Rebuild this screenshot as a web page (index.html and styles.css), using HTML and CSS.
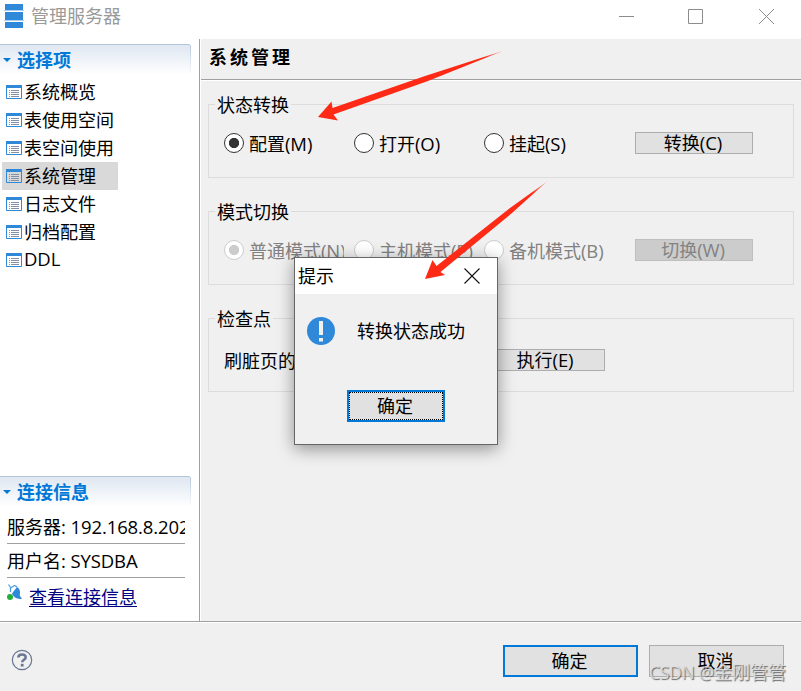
FILE: index.html
```html
<!DOCTYPE html>
<html lang="zh-CN">
<head>
<meta charset="utf-8">
<title>管理服务器</title>
<link rel="stylesheet" href="styles.css">
</head>
<body>
<svg class="defs" width="0" height="0">
  <symbol id="list" viewBox="0 0 16 14">
    <path d="M.5 1v12.500h15V1" fill="none" stroke="#2f88d8"/>
    <path d="M0 0h16v3H0z" fill="#2f88d8"/>
    <path d="M3 5.500h1M3 7.500h1M3 9.500h1M3 11.500h1M5 5.500h8M5 7.500h8M5 9.500h8M5 11.500h8" stroke="#8490a8" fill="none"/>
  </symbol>
</svg>
<div class="window">
  <header class="titlebar">
    <svg class="logo" width="20" height="24" viewBox="0 0 20 24"><path d="M1 0h18v6H1zM1 8h18v8H1zM1 18h18v6H1z" fill="#2f88d8"/><path d="M0 6.500h20M0 16.500h20" stroke="#a9d0f2"/></svg>
    <span class="title">管理服务器</span>
    <svg class="controls" width="156" height="16" viewBox="0 0 156 16" fill="none" stroke="#8c8c8c"><path d="M0 7.500h15M69.500 .5h14v14h-14zM140 0l15 15M155 0l-15 15"/></svg>
  </header>
  <div class="body">
    <aside class="sidebar">
      <h2 class="section"><i class="caret"></i>选择项</h2>
      <ul class="nav">
        <li><svg><use href="#list"/></svg>系统概览</li>
        <li><svg><use href="#list"/></svg>表使用空间</li>
        <li><svg><use href="#list"/></svg>表空间使用</li>
        <li class="selected"><svg><use href="#list"/></svg>系统管理</li>
        <li><svg><use href="#list"/></svg>日志文件</li>
        <li><svg><use href="#list"/></svg>归档配置</li>
        <li><svg><use href="#list"/></svg><span class="en">DDL</span></li>
      </ul>
      <h2 class="section"><i class="caret"></i>连接信息</h2>
      <div class="info">
        <p>服务器<span class="en">: 192.168.8.202</span></p>
        <p>用户名<span class="en">: SYSDBA</span></p>
      </div>
      <div class="link-row">
        <svg width="16" height="17" viewBox="0 0 16 17"><path d="M1.500 .5l2 3M3.500 8V4l4-2.500L10 3" fill="none" stroke="#4a9be0" stroke-width="1.200"/><path d="M5 9.500L10 3c3 1.500 3.500 5 2.700 8.500L15 15c-4 0-8.500-1-10-5.500z" fill="#2f88d8"/><circle cx="3" cy="13" r="3" fill="#26ad3b"/></svg>
        <a>查看连接信息</a>
      </div>
    </aside>
    <main class="main">
      <h1>系统管理</h1>
      <div class="groups">
        <section class="group">
          <span class="legend">状态转换</span>
          <label class="radio on"><i></i><span>配置<span class="en">(M)</span></span></label>
          <label class="radio"><i></i><span>打开<span class="en">(O)</span></span></label>
          <label class="radio"><i></i><span>挂起<span class="en">(S)</span></span></label>
          <button class="btn small">转换<span class="en">(C)</span></button>
        </section>
        <section class="group disabled">
          <span class="legend">模式切换</span>
          <label class="radio on"><i></i><span>普通模式<span class="en">(N)</span></span></label>
          <label class="radio"><i></i><span>主机模式<span class="en">(P)</span></span></label>
          <label class="radio"><i></i><span>备机模式<span class="en">(B)</span></span></label>
          <button class="btn small">切换<span class="en">(W)</span></button>
        </section>
        <section class="group checkpoint">
          <span class="legend">检查点</span>
          <span class="field">刷脏页的</span>
          <button class="btn small">执行<span class="en">(E)</span></button>
        </section>
      </div>
    </main>
  </div>
  <footer class="footer">
    <svg class="help" width="22" height="22" viewBox="0 0 22 22" fill="none"><circle cx="11" cy="11" r="9.700" stroke="#687894" stroke-width="1.200"/><path d="M7.300 8.500c.2-4 7.400-4 7.400-.2 0 2.600-3.500 2.400-3.500 5" stroke="#687894" stroke-width="2.600"/><path d="M9.800 14.800h2.800v2.700H9.800z" fill="#687894"/></svg>
    <button class="btn primary">确定</button>
    <button class="btn">取消</button>
  </footer>

  <div class="dialog">
    <div class="dialog-title"><span>提示</span><svg width="16" height="16" viewBox="0 0 16 16"><path d="M.5 .5l15 15M15.500 .5l-15 15" stroke="#111" stroke-width="1.100"/></svg></div>
    <div class="dialog-message">
      <svg width="28" height="28" viewBox="0 0 28 28"><circle cx="14" cy="14" r="14" fill="#2f88d8"/><path d="M12 4h4v14h-4zM12 21h4v3.500h-4z" fill="#f0f0f0"/></svg>
      <span>转换状态成功</span>
    </div>
    <button class="btn primary focus">确定</button>
  </div>

  <svg class="arrows" width="801" height="691" viewBox="0 0 801 691">
    <defs>
      <linearGradient id="tip1" gradientUnits="userSpaceOnUse" x1="504" y1="50" x2="484" y2="57"><stop stop-color="#ff2a16" stop-opacity=".3"/><stop offset="1" stop-color="#ff2a16"/></linearGradient>
      <linearGradient id="tip2" gradientUnits="userSpaceOnUse" x1="547" y1="181" x2="532" y2="193"><stop stop-color="#ff2a16" stop-opacity=".3"/><stop offset="1" stop-color="#ff2a16"/></linearGradient>
    </defs>
    <path fill="url(#tip1)" d="M318 117L331.500 101.500L332.500 108L425 76L504 50.500L428 81L333.500 114.500L338 120.500Z"/>
    <path fill="url(#tip2)" d="M425 279L432.500 260L436.500 266L510 208L547 181.500L512 213L440.500 272L445 275Z"/>
  </svg>
  <div class="watermark"><span class="en">CSDN @</span>金刚管管</div>
</div>
</body>
</html>
```
FILE: styles.css
```css
* { box-sizing: border-box; }
body {
  margin: 0;
  font: 400 18px "Noto Sans CJK SC", sans-serif;
  color: #000;
}
h1, h2, p, ul { margin: 0; padding: 0; }
i { display: block; }
.defs { position: absolute; }
.en {
  font-family: "Open Sans", sans-serif;
  font-size: 18.5px;
  line-height: 1;
  letter-spacing: -0.1px;
  white-space: pre;
}
.window {
  position: relative;
  width: 801px;
  height: 691px;
  display: flex;
  flex-direction: column;
  background: #f0f0f0;
  overflow: hidden;
}
.titlebar {
  height: 39px;
  flex: none;
  background: #fff;
  display: flex;
  align-items: flex-start;
  padding: 4px 26px 0 4px;
  color: #999;
}
.title { line-height: 22px; margin-left: 7px; flex: 1; }
.controls { margin-top: 5px; }
.body { height: 582px; flex: none; display: flex; }
.sidebar {
  width: 200px;
  flex: none;
  display: flex;
  flex-direction: column;
  padding-top: 5px;
  background: #fff;
  border-right: 1px solid #a0a0a0;
}
.section {
  width: 191px;
  height: 31px;
  flex: none;
  display: flex;
  align-items: center;
  padding: 0 0 2px 3px;
  font-size: 18px;
  font-weight: 700;
  line-height: 28px;
  color: #0078d7;
  border-top: 1px solid #b4c6dc;
  border-top-right-radius: 3px;
  background: linear-gradient(#b4c6dc, #fff) right / 1px 100% no-repeat, linear-gradient(#dfe7f2, #fff);
}
.caret {
  width: 8px;
  border: 4px solid transparent;
  border-top-color: #0078d7;
  border-bottom: 0;
  margin: 2px 6px 0 0;
}
.nav {
  list-style: none;
  height: 401px;
  padding: 3px 0 0 2px;
}
.nav li {
  width: 116px;
  height: 28px;
  display: flex;
  align-items: center;
  padding: 0 0 2px 4px;
  line-height: 26px;
  white-space: nowrap;
}
.nav svg { width: 16px; height: 14px; margin: 2px 2px 0 0; flex: none; }
.nav .selected { background: #d9d9d9; }
.info { width: 178px; margin: 3px 0 0 7px; }
.info p {
  height: 34px;
  line-height: 33px;
  border-bottom: 1px solid #a0a0a0;
  white-space: nowrap;
  overflow: hidden;
}
.link-row { display: flex; padding: 6px 0 0 7px; }
.link-row a {
  margin-left: 6px;
  line-height: 25px;
  color: #000080;
  text-decoration: underline;
  text-underline-offset: 2px;
}
.main { flex: 1; border-left: 1px solid #fff; }
.main h1 {
  height: 41px;
  padding-left: 8px;
  font-size: 18px;
  font-weight: 700;
  line-height: 35px;
  letter-spacing: 3px;
  border-bottom: 1px solid #a0a0a0;
  box-shadow: 0 1px #fff;
}
.groups {
  display: flex;
  flex-direction: column;
  gap: 33px;
  padding: 24px 7px 0 7px;
}
.group {
  position: relative;
  height: 74px;
  display: flex;
  align-items: center;
  padding: 4px 0 0 15px;
  border: 1px solid #dcdcdc;
}
.group.checkpoint { padding-top: 9px; }
.legend {
  position: absolute;
  left: 6px;
  top: -14px;
  padding: 0 2px;
  line-height: 26px;
  background: #f0f0f0;
}
.radio {
  width: 120px;
  margin-right: 10px;
  flex: none;
  display: flex;
  align-items: center;
  line-height: 26px;
  white-space: nowrap;
  overflow: hidden;
}
.radio i {
  width: 20px;
  height: 20px;
  flex: none;
  margin-right: 5px;
  border: 1px solid #333;
  border-radius: 50%;
  background: #fff;
}
.radio.on i { background: radial-gradient(circle, #333 4.8px, #fff 5.4px); }
.disabled .radio { color: #808080; }
.disabled .radio i { border-color: #ccc; }
.disabled .radio.on i { background: radial-gradient(circle, #ccc 4.8px, #fff 5.4px); }
.field { width: 263px; line-height: 26px; }
.btn {
  width: 135px;
  height: 32px;
  flex: none;
  padding: 0 2px 2px 0;
  font: inherit;
  line-height: 26px;
  color: #000;
  background: #e1e1e1;
  border: 1px solid #adadad;
}
.btn.small { width: 118px; height: 22px; line-height: 18px; }
.radio + .btn { margin-left: 21px; }
.disabled .btn { background: #ccc; border-color: #bfbfbf; color: #838383; }
.btn.primary { border: 2px solid #0078d7; }
.footer {
  flex: 1;
  display: flex;
  gap: 11px;
  padding: 22px 17px 0 11px;
  border-top: 1px solid #a0a0a0;
  box-shadow: inset 0 1px #fff;
}
.footer .btn { margin-top: 1px; }
.help { margin: 5px auto 0 0; }
.dialog {
  position: absolute;
  left: 294px;
  top: 257px;
  width: 204px;
  height: 188px;
  background: #f0f0f0;
  border: 1px solid #666;
  box-shadow: 0 4px 16px rgba(0, 0, 0, .4);
}
.dialog-title {
  height: 36px;
  display: flex;
  justify-content: space-between;
  align-items: center;
  padding: 0 17px 0 3px;
  background: #fff;
}
.dialog-title span, .dialog-message span { padding-bottom: 2px; }
.dialog-message {
  display: flex;
  align-items: center;
  gap: 22px;
  height: 28px;
  margin: 23px 0 0 12px;
}
.dialog .btn {
  display: block;
  width: 98px;
  margin: 45px 0 0 52px;
}
.btn.focus { outline: 1px dotted #000; outline-offset: -3px; }
.arrows { position: absolute; left: 0; top: 0; }
.watermark {
  position: absolute;
  left: 649px;
  top: 658px;
  line-height: 26px;
  white-space: nowrap;
  color: rgba(225, 225, 225, .85);
  text-shadow: 1px 1px 1px #666;
}
.watermark .en { font-size: 17.5px; letter-spacing: -0.3px; }
```
